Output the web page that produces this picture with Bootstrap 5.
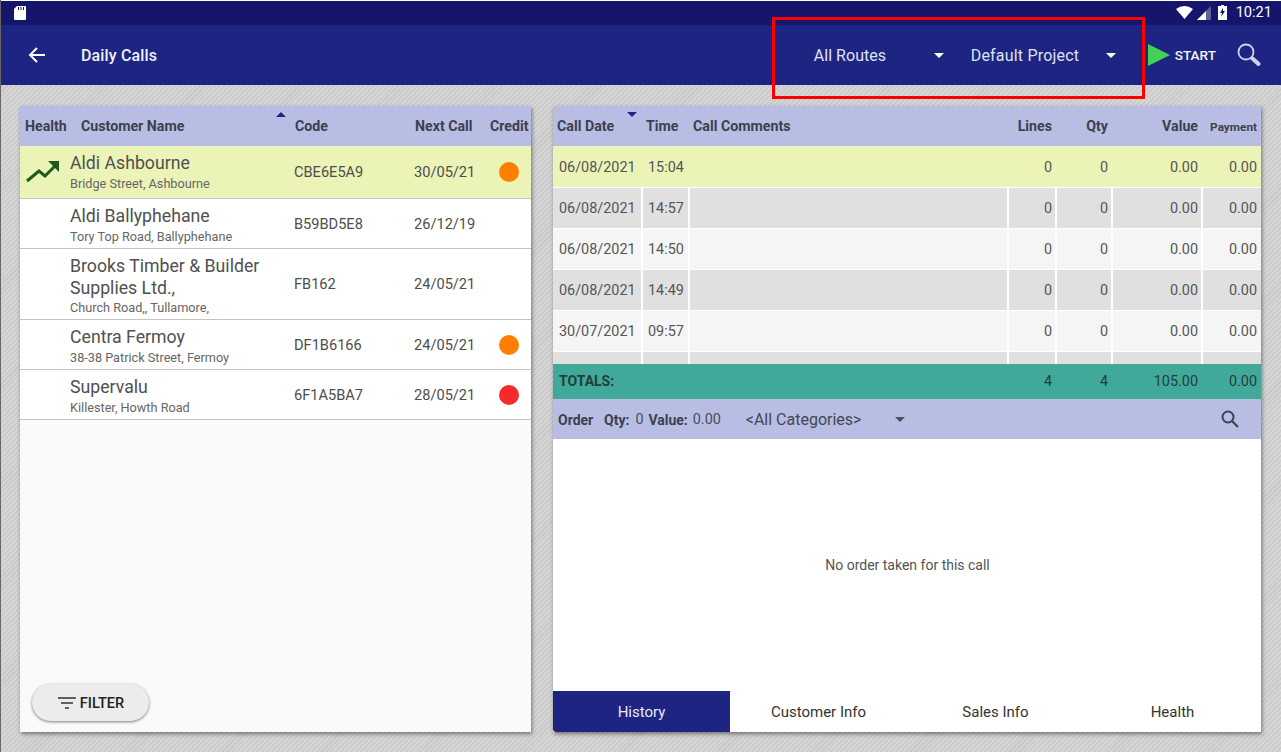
<!DOCTYPE html>
<html lang="en">
<head>
<meta charset="utf-8">
<title>Daily Calls</title>
<link href="https://cdn.jsdelivr.net/npm/bootstrap@5.3.0/dist/css/bootstrap.min.css" rel="stylesheet">
<style>
html,body{height:100%;}
body{width:1281px;height:752px;overflow:hidden;font-family:Roboto,"Liberation Sans",sans-serif;color:#4a4a4a;
 background-color:#d2d2d2;background-image:repeating-linear-gradient(135deg,#d6d6d6 0,#d6d6d6 2px,#c9c9c9 2px,#c9c9c9 3.5px);
 border-left:1px solid #666;position:relative;}
.status-strip{height:24px;margin-top:1px;background:#15166b;color:#fff;font-size:14.6px;padding-left:13px;padding-right:9px;box-shadow:0 -1px 0 #fff;}
.sig-icon{margin-left:4px}.bat-icon{margin-left:7px}.clock-text{margin-left:9px}
.top-bar{height:60px;background:#1e2481;color:#fff;}
.back-slot{width:80px;padding-left:27px;}
.title-text{font-size:16px;font-weight:500;color:#f0f1fa;letter-spacing:.15px;padding-top:1px;}
.spin-a{width:172px;padding-left:33px;font-size:16px;color:#dfe2f4;letter-spacing:.05px;}
.spin-b{width:195px;padding-left:18px;font-size:16px;color:#dfe2f4;letter-spacing:.2px;}
.spin-a span,.spin-b span,.start-text{padding-top:1px;}
.spin-arrow{display:block;width:0;height:0;border-left:5px solid transparent;border-right:5px solid transparent;border-top:5px solid #fff;}
.spin-a .spin-arrow{margin-right:9px}
.spin-b .spin-arrow{margin-right:32px}
.start-text{font-size:13.6px;font-weight:500;margin-left:5px;color:#f3f4fb;}
.search-top{margin-left:21px;margin-right:20px;}
.stage{gap:22px;padding:21px 20px 20px 19px;height:667px;}
.pane{background:#fafafa;box-shadow:1px 2px 4px rgba(0,0,0,.45);height:626px;}
.pane-left{width:511px;}
.pane-right{width:708px;background:#fff;}
.head-row{height:40px;background:#b8bee3;font-size:14.2px;font-weight:700;color:#3d3f4d;flex:none;padding-top:2px;}
.hc1{width:61px;padding-left:5px}.hc2{width:214px}.hc3{width:120px}.hc4{width:75px}.hc5{width:41px}
.sort-mark{position:absolute;width:0;height:0;border-left:5px solid transparent;border-right:5px solid transparent;}
.sort-up{left:195px;top:-4px;border-bottom:5px solid #1e2481;}
.sort-down{left:74px;top:-4px;border-top:5px solid #1e2481;}
.cust-row{background:#fff;border-bottom:1px solid #c4c4c4;font-size:14.6px;color:#4d4d4d;}
.cust-row.picked{background:#ebf3b7;}
.picked .c2{margin-bottom:2px}
.picked .c3,.picked .c4{padding-top:2px}
.c1{width:50px;padding-left:6px}.c2{width:224px}.c3{width:120px}.c4{width:75px}.c5{width:41px}
.cust-name{font-size:17.7px;line-height:22px;color:#505050;}
.cust-addr{font-size:12.7px;line-height:15px;color:#666;margin-top:2px;}
.tall-addr{margin-top:1px;}
.text-shift{padding-top:2px;}
.dot-mark{display:block;width:20px;height:20px;border-radius:50%;margin-left:10px;}
.text-shift .dot-mark{margin-top:-2px;}
.filter-btn{position:absolute;left:12px;bottom:11px;width:117px;height:37px;border-radius:19px;background:#ececec;box-shadow:0 1px 3px rgba(0,0,0,.5);font-size:14.5px;font-weight:500;color:#222;padding-left:1px;}
.filter-btn svg{margin-top:1px}
.filter-btn span{padding-top:2px}
.col-d{width:88px;margin-right:2px;padding-left:6px}
.col-t{width:45px;margin-right:2px;padding-left:5px}
.col-c{width:317px;margin-right:2px}
.col-l{width:46px;margin-right:2px;text-align:right;padding-right:3px}
.col-q{width:54px;margin-right:2px;text-align:right;padding-right:3px}
.col-v{width:88px;margin-right:2px;text-align:right;padding-right:3px}
.col-p{width:58px;text-align:right;padding-right:4px}
.hist-rows{height:218px;overflow:hidden;flex:none;font-size:14.4px;color:#555;}
.hist-row{height:40px;margin-bottom:1px;}
.hist-row>div{height:100%;line-height:41px;}
.hist-row.first{height:41px;background:#ebf3b7;margin-bottom:1px;}
.hist-row.first>div{line-height:43px;}
.tone-a>div{background:#e0e0e0;}
.tone-b>div{background:#f5f5f5;}
.head-pay{font-size:11.8px;padding-top:1px;}
.totals-row{height:35px;background:#40a999;font-size:14.4px;color:#1f3f3b;flex:none;}
.total-label{width:456px;font-weight:700;padding-left:6px;font-size:14px;}
.order-bar{height:40px;background:#b8bee3;font-size:14.4px;color:#4a4c5c;flex:none;padding-top:2px;}
.order-bar b{color:#3d3f4d;font-weight:700;font-size:14px;}
.cat-text{font-size:16px;color:#444653;}
.empty-note{font-size:14px;color:#555;padding-left:1px;}
.tab-row{height:41px;font-size:15px;color:#333;flex:none;}
.tab-cell{width:177px;text-align:center;line-height:43px;}
.tab-cell.on{background:#1e2481;color:#e8eaf8;border-bottom-left-radius:3px;}
.red-frame{position:absolute;left:771px;top:17px;width:373px;height:82px;border:3px solid #f00;pointer-events:none;}
.ps-head{padding-left:3px}
.order-lead{margin-left:5px;width:46px}
.qty-val{margin-left:6px;width:13px}
.val-val{margin-left:5px;width:53px}
.cat-text{width:149px}
.search-order{margin-left:315px;margin-top:-2px}
.order-bar .spin-arrow{margin-top:-2px}
</style>
</head>
<body>
<div class="status-strip d-flex align-items-center justify-content-between">
  <svg width="12" height="14" viewBox="0 0 12 14"><path fill="#fff" d="M3 0h8a1 1 0 0 1 1 1v12a1 1 0 0 1-1 1H1a1 1 0 0 1-1-1V3z"/><path stroke="#15166b" d="M4.500 1v3M7 1v3M9.500 1v3"/></svg>
  <div class="d-flex align-items-center">
    <svg width="17" height="13" viewBox="0 0 17 13"><path fill="#fff" d="M0 3Q8.500-3 17 3L8.500 13z"/></svg>
    <svg class="sig-icon" width="14" height="14" viewBox="0 0 14 14"><path fill="#5f6296" d="M14 0v14H0z"/><path fill="#fff" d="M9 5v9H0z"/></svg>
    <svg class="bat-icon" width="9" height="15" viewBox="0 0 9 15"><path fill="#fff" d="M3 0h3v1h3v14H0V1h3z"/><path fill="#15166b" d="M5 3 2 8h2l-1 4 4-6H5z"/></svg>
    <span class="clock-text">10:21</span>
  </div>
</div>
<div class="top-bar d-flex align-items-center">
  <div class="back-slot"><svg class="d-block" width="18" height="16" viewBox="0 0 18 16"><path fill="none" stroke="#fff" stroke-width="2" d="M17 8H2M9 1 2 8l7 7"/></svg></div>
  <div class="title-text flex-grow-1">Daily Calls</div>
  <div class="spin-a d-flex align-items-center justify-content-between"><span>All Routes</span><i class="spin-arrow"></i></div>
  <div class="spin-b d-flex align-items-center justify-content-between"><span>Default Project</span><i class="spin-arrow"></i></div>
  <svg width="22" height="22" viewBox="0 0 22 22"><path fill="#43d154" d="M0 0l22 11L0 22z"/></svg>
  <span class="start-text">START</span>
  <svg class="search-top" width="24" height="24" viewBox="0 0 24 24"><circle cx="9" cy="9" r="7.500" fill="none" stroke="#cfd3ea" stroke-width="1.800"/><path stroke="#cfd3ea" stroke-width="4" stroke-linecap="round" d="M15.500 15.500l6 5.500"/></svg>
</div>

<div class="stage d-flex">
  <div class="pane pane-left d-flex flex-column position-relative">
    <div class="head-row d-flex align-items-center">
      <div class="hc1">Health</div>
      <div class="hc2 position-relative">Customer Name<i class="sort-mark sort-up"></i></div>
      <div class="hc3">Code</div><div class="hc4">Next Call</div><div class="hc5">Credit</div>
    </div>
    <div class="cust-row picked d-flex align-items-center" style="height:53px">
      <div class="c1"><svg class="d-block" width="34" height="22" viewBox="0 0 34 22"><path fill="none" stroke="#1c5a1e" stroke-width="3" d="M1 20 13 10l6 5L30 4"/><path fill="#1c5a1e" d="M22 0h11v11z"/></svg></div>
      <div class="c2"><div class="cust-name">Aldi Ashbourne</div><div class="cust-addr">Bridge Street, Ashbourne</div></div>
      <div class="c3">CBE6E5A9</div><div class="c4">30/05/21</div><div class="c5"><i class="dot-mark" style="background:#ff8000"></i></div>
    </div>
    <div class="cust-row d-flex align-items-center text-shift" style="height:50px">
      <div class="c1"></div>
      <div class="c2"><div class="cust-name">Aldi Ballyphehane</div><div class="cust-addr">Tory Top Road, Ballyphehane</div></div>
      <div class="c3">B59BD5E8</div><div class="c4">26/12/19</div><div class="c5"></div>
    </div>
    <div class="cust-row d-flex align-items-center text-shift" style="height:71px">
      <div class="c1"></div>
      <div class="c2"><div class="cust-name">Brooks Timber &amp; Builder<br>Supplies Ltd.,</div><div class="cust-addr tall-addr">Church Road,, Tullamore,</div></div>
      <div class="c3">FB162</div><div class="c4">24/05/21</div><div class="c5"></div>
    </div>
    <div class="cust-row d-flex align-items-center text-shift" style="height:50px">
      <div class="c1"></div>
      <div class="c2"><div class="cust-name">Centra Fermoy</div><div class="cust-addr">38-38 Patrick Street, Fermoy</div></div>
      <div class="c3">DF1B6166</div><div class="c4">24/05/21</div><div class="c5"><i class="dot-mark" style="background:#ff8000"></i></div>
    </div>
    <div class="cust-row d-flex align-items-center text-shift" style="height:50px">
      <div class="c1"></div>
      <div class="c2"><div class="cust-name">Supervalu</div><div class="cust-addr">Killester, Howth Road</div></div>
      <div class="c3">6F1A5BA7</div><div class="c4">28/05/21</div><div class="c5"><i class="dot-mark" style="background:#f52a2a"></i></div>
    </div>
    <div class="filter-btn d-flex align-items-center justify-content-center gap-1">
      <svg width="18" height="12" viewBox="0 0 18 12"><path stroke="#333" stroke-width="1.400" d="M0 1h18M3 6h12M7 11h4"/></svg>
      <span>FILTER</span>
    </div>
  </div>

  <div class="pane pane-right d-flex flex-column">
    <div class="head-row d-flex align-items-center">
      <div class="col-d position-relative ps-1">Call Date<i class="sort-mark sort-down"></i></div>
      <div class="col-t ps-head">Time</div>
      <div class="col-c ps-head">Call Comments</div>
      <div class="col-l">Lines</div><div class="col-q">Qty</div><div class="col-v">Value</div><div class="col-p head-pay">Payment</div>
    </div>
    <div class="hist-rows">
      <div class="hist-row first d-flex"><div class="col-d">06/08/2021</div><div class="col-t">15:04</div><div class="col-c"></div><div class="col-l">0</div><div class="col-q">0</div><div class="col-v">0.00</div><div class="col-p">0.00</div></div>
      <div class="hist-row tone-a d-flex"><div class="col-d">06/08/2021</div><div class="col-t">14:57</div><div class="col-c"></div><div class="col-l">0</div><div class="col-q">0</div><div class="col-v">0.00</div><div class="col-p">0.00</div></div>
      <div class="hist-row tone-b d-flex"><div class="col-d">06/08/2021</div><div class="col-t">14:50</div><div class="col-c"></div><div class="col-l">0</div><div class="col-q">0</div><div class="col-v">0.00</div><div class="col-p">0.00</div></div>
      <div class="hist-row tone-a d-flex"><div class="col-d">06/08/2021</div><div class="col-t">14:49</div><div class="col-c"></div><div class="col-l">0</div><div class="col-q">0</div><div class="col-v">0.00</div><div class="col-p">0.00</div></div>
      <div class="hist-row tone-b d-flex"><div class="col-d">30/07/2021</div><div class="col-t">09:57</div><div class="col-c"></div><div class="col-l">0</div><div class="col-q">0</div><div class="col-v">0.00</div><div class="col-p">0.00</div></div>
      <div class="hist-row tone-a d-flex"><div class="col-d"></div><div class="col-t"></div><div class="col-c"></div><div class="col-l"></div><div class="col-q"></div><div class="col-v"></div><div class="col-p"></div></div>
    </div>
    <div class="totals-row d-flex align-items-center">
      <div class="total-label">TOTALS:</div>
      <div class="col-l">4</div><div class="col-q">4</div><div class="col-v">105.00</div><div class="col-p">0.00</div>
    </div>
    <div class="order-bar d-flex align-items-center">
      <b class="order-lead">Order</b>
      <b>Qty:</b><span class="qty-val">0</span><b>Value:</b><span class="val-val">0.00</span>
      <span class="cat-text">&lt;All Categories&gt;</span>
      <i class="spin-arrow" style="border-top-color:#4a4c5c"></i>
      <svg class="search-order" width="20" height="20" viewBox="0 0 20 20"><circle cx="8" cy="8" r="5.500" fill="none" stroke="#3f4152" stroke-width="2"/><path stroke="#3f4152" stroke-width="2.200" d="M12 12l6 6"/></svg>
    </div>
    <div class="empty-note flex-grow-1 d-flex align-items-center justify-content-center">No order taken for this call</div>
    <div class="tab-row d-flex">
      <div class="tab-cell on">History</div><div class="tab-cell">Customer Info</div><div class="tab-cell">Sales Info</div><div class="tab-cell">Health</div>
    </div>
  </div>
</div>
<div class="red-frame"></div>
<script src="https://cdn.jsdelivr.net/npm/bootstrap@5.3.0/dist/js/bootstrap.bundle.min.js"></script>
</body>
</html>
